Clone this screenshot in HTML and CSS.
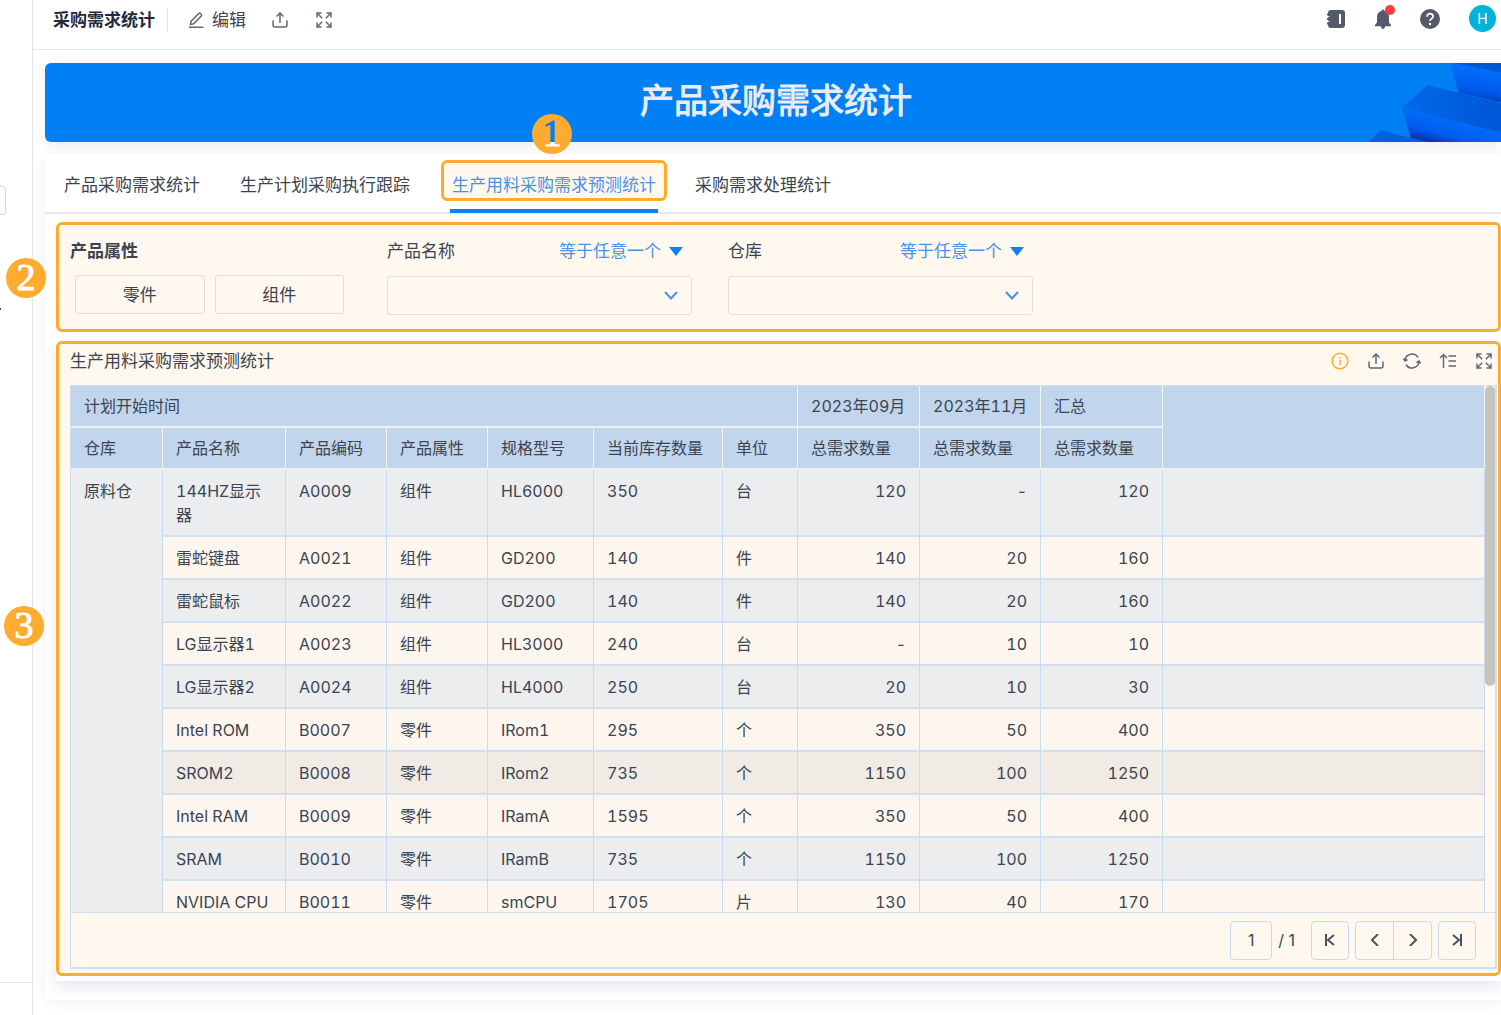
FILE: index.html
```html
<!DOCTYPE html>
<html lang="zh-CN">
<head>
    <meta charset="utf-8">
    <title>采购需求统计</title>
    <link rel="stylesheet" href="styles.css">
</head>
<body>
    <svg class="defs" width="0" height="0">
        <symbol id="i-export" viewBox="0 0 16 16"><path d="M1 8.500v4.500a2 2 0 0 0 2 2h10a2 2 0 0 0 2-2V8.500M8 11V1.500M4.500 4.500L8 1l3.500 3.500"/></symbol>
        <symbol id="i-full" viewBox="0 0 16 16"><path d="M1 5.500V1h4.500M1.200 1.200l5 5M10.500 1H15v4.500M14.800 1.200l-5 5M1 10.500V15h4.500M1.200 14.800l5-5M15 10.500V15h-4.500M14.800 14.800l-5-5"/></symbol>
    </svg>

    <aside class="side">
        <div class="side-box"></div>
        <div class="side-dot"></div>
        <div class="side-foot"></div>
    </aside>

    <div class="main">
        <header class="top">
            <h1>采购需求统计</h1>
            <button class="edit">
                <svg class="icon" viewBox="0 0 16 16"><path d="M1 15.300h14.500M2.500 12.500l.6-3.300L10.800 1.500q.8-.7 1.600 0l.9.900q.7.800 0 1.600L5.600 11.700z"/></svg>
                编辑
            </button>
            <button class="tool" aria-label="导出"><svg class="icon"><use href="#i-export"/></svg></button>
            <button class="tool" aria-label="全屏"><svg class="icon"><use href="#i-full"/></svg></button>
            <div class="user">
                <button aria-label="通讯录"><svg width="20" height="20" viewBox="0 0 20 20"><rect x="2" y="1" width="17" height="18" rx="3" fill="#535a69"/><path d="M1 5.500h3M1 10h3M1 14.500h3" stroke="#535a69" stroke-width="2"/><path d="M2 7.700h1.500M2 12.300h1.500" stroke="#fff"/><path d="M14 5v10" stroke="#fff" stroke-width="2"/></svg></button>
                <button class="bell" aria-label="消息"><svg width="16" height="20" viewBox="0 0 16 20"><path d="M8 0.500q1.300 0 1.300 1.300C12.500 2.600 14 5 14 8v5.500l2 2.500v1.200H0V16l2-2.500V8c0-3 1.500-5.400 4.700-6.200Q6.700.5 8 .5zM6 17h4q0 3-2 3t-2-3z" fill="#535a69"/></svg></button>
                <button aria-label="帮助"><svg width="20" height="20" viewBox="0 0 20 20"><circle cx="10" cy="10" r="10" fill="#535a69"/><path d="M7 7.800C7 3.500 13 4 13 7.500c0 2.200-3 2.300-3 4.500" fill="none" stroke="#fff" stroke-width="1.800"/><circle cx="10" cy="15" r="1.200" fill="#fff"/></svg></button>
                <a class="avatar" href="#">H</a>
            </div>
        </header>

        <div class="banner">
            <h2>产品采购需求统计</h2>
            <svg class="banner-art" viewBox="500 189 400 236">
                <defs>
                    <linearGradient id="g1" x1="0" y1="0" x2="-0.150" y2="1"><stop offset="0" stop-color="#0070fb"/><stop offset=".6" stop-color="#005aea"/><stop offset="1" stop-color="#002a9c"/></linearGradient>
                    <linearGradient id="g2" x1="0" y1="0" x2="1" y2="0"><stop offset="0" stop-color="#006aea"/><stop offset="1" stop-color="#0056d6"/></linearGradient>
                    <linearGradient id="g3" gradientUnits="userSpaceOnUse" x1="720" y1="350" x2="700" y2="430"><stop offset="0" stop-color="#006cf8"/><stop offset=".6" stop-color="#005cee"/><stop offset="1" stop-color="#0030a8"/></linearGradient>
                </defs>
                <path d="M750 189h150v118L773 277z" fill="url(#g1)"/>
                <path d="M758 189h142v28z" fill="#0058d0"/>
                <path d="M604 322l76-67 220 54v90z" fill="url(#g2)"/>
                <path d="M604 322l296 75v28H640l-9-11z" fill="url(#g3)"/>
                <path d="M505 425l37-34 140 34z" fill="#005fdd"/>
            </svg>
        </div>

        <div class="card">
            <nav class="tabs">
                <a href="#">产品采购需求统计</a>
                <a href="#">生产计划采购执行跟踪</a>
                <a href="#" class="active">生产用料采购需求预测统计<span class="badge one"><b>1</b></span></a>
                <a href="#">采购需求处理统计</a>
            </nav>

            <section class="panel filters">
                <span class="badge two">2</span>
                <div class="kind">
                    <strong>产品属性</strong>
                    <div class="kind-btns">
                        <button>零件</button>
                        <button>组件</button>
                    </div>
                </div>
                <div class="field">
                    <div class="field-head">
                        <label for="name">产品名称</label>
                        <button class="op">等于任意一个<i></i></button>
                    </div>
                    <div class="select">
                        <select id="name"><option></option></select>
                        <svg width="14" height="9" viewBox="0 0 14 9"><path d="M1 1l6 6.500L13 1"/></svg>
                    </div>
                </div>
                <div class="field">
                    <div class="field-head">
                        <label for="store">仓库</label>
                        <button class="op">等于任意一个<i></i></button>
                    </div>
                    <div class="select">
                        <select id="store"><option></option></select>
                        <svg width="14" height="9" viewBox="0 0 14 9"><path d="M1 1l6 6.500L13 1"/></svg>
                    </div>
                </div>
            </section>

            <div class="report-wrap">
            <section class="panel report">
                <span class="badge three">3</span>
                <div class="report-head">
                    <h3>生产用料采购需求预测统计</h3>
                    <div class="report-tools">
                        <button class="info" aria-label="说明"><svg class="icon" viewBox="0 0 16 16"><circle cx="8" cy="8" r="7.800"/><path d="M8 7v5M8 4v1.500"/></svg></button>
                        <button aria-label="导出"><svg class="icon"><use href="#i-export"/></svg></button>
                        <button aria-label="刷新"><svg class="icon" viewBox="0 0 16 16"><path d="M1 7.500A7 7 0 0 1 14 4.500M15 8.500A7 7 0 0 1 2 11.500M-.5 5.500L1 8l2.500-1.500M12.500 9.500L15 8l1.500 2.500"/></svg></button>
                        <button aria-label="排序"><svg class="icon" viewBox="0 0 16 16"><path d="M3.500 15V2M0 5l3.500-3.500L7 5M8.500 3H16M8.500 8H16M8.500 13H16"/></svg></button>
                        <button aria-label="全屏"><svg class="icon"><use href="#i-full"/></svg></button>
                    </div>
                </div>

                <div class="grid">
                    <div class="grid-view">
                        <table>
                            <colgroup>
                                <col class="w92"><col class="w123"><col class="w101"><col class="w101"><col class="w106"><col class="w129"><col class="w75"><col class="w122"><col class="w121"><col class="w122"><col>
                            </colgroup>
                            <thead>
                                <tr><th colspan="7">计划开始时间</th><th>2023年09月</th><th>2023年11月</th><th>汇总</th><th rowspan="2"></th></tr>
                                <tr><th>仓库</th><th>产品名称</th><th>产品编码</th><th>产品属性</th><th>规格型号</th><th>当前库存数量</th><th>单位</th><th>总需求数量</th><th>总需求数量</th><th>总需求数量</th></tr>
                            </thead>
                            <tbody>
                                <tr class="tall"><td rowspan="10">原料仓</td><td>144HZ显示器</td><td>A0009</td><td>组件</td><td>HL6000</td><td>350</td><td>台</td><td class="n">120</td><td class="n">-</td><td class="n">120</td><td></td></tr>
                                <tr><td>雷蛇键盘</td><td>A0021</td><td>组件</td><td>GD200</td><td>140</td><td>件</td><td class="n">140</td><td class="n">20</td><td class="n">160</td><td></td></tr>
                                <tr><td>雷蛇鼠标</td><td>A0022</td><td>组件</td><td>GD200</td><td>140</td><td>件</td><td class="n">140</td><td class="n">20</td><td class="n">160</td><td></td></tr>
                                <tr><td>LG显示器1</td><td>A0023</td><td>组件</td><td>HL3000</td><td>240</td><td>台</td><td class="n">-</td><td class="n">10</td><td class="n">10</td><td></td></tr>
                                <tr><td>LG显示器2</td><td>A0024</td><td>组件</td><td>HL4000</td><td>250</td><td>台</td><td class="n">20</td><td class="n">10</td><td class="n">30</td><td></td></tr>
                                <tr><td>Intel ROM</td><td>B0007</td><td>零件</td><td>IRom1</td><td>295</td><td>个</td><td class="n">350</td><td class="n">50</td><td class="n">400</td><td></td></tr>
                                <tr class="hover"><td>SROM2</td><td>B0008</td><td>零件</td><td>IRom2</td><td>735</td><td>个</td><td class="n">1150</td><td class="n">100</td><td class="n">1250</td><td></td></tr>
                                <tr><td>Intel RAM</td><td>B0009</td><td>零件</td><td>IRamA</td><td>1595</td><td>个</td><td class="n">350</td><td class="n">50</td><td class="n">400</td><td></td></tr>
                                <tr><td>SRAM</td><td>B0010</td><td>零件</td><td>IRamB</td><td>735</td><td>个</td><td class="n">1150</td><td class="n">100</td><td class="n">1250</td><td></td></tr>
                                <tr><td>NVIDIA CPU</td><td>B0011</td><td>零件</td><td>smCPU</td><td>1705</td><td>片</td><td class="n">130</td><td class="n">40</td><td class="n">170</td><td></td></tr>
                            </tbody>
                        </table>
                        <div class="track"><div class="thumb"></div></div>
                    </div>
                    <div class="pager">
                        <input type="text" value="1" aria-label="页码">
                        <span>/ 1</span>
                        <button aria-label="首页"><svg width="12" height="12" viewBox="0 0 12 12"><path d="M2 0v12M10 1L4 6l6 5"/></svg></button>
                        <div class="pair">
                            <button aria-label="上一页"><svg width="12" height="12" viewBox="0 0 12 12"><path d="M9 0L3 6l6 6"/></svg></button>
                            <button aria-label="下一页"><svg width="12" height="12" viewBox="0 0 12 12"><path d="M3 0l6 6-6 6"/></svg></button>
                        </div>
                        <button aria-label="末页"><svg width="12" height="12" viewBox="0 0 12 12"><path d="M10 0v12M2 1l6 5-6 5"/></svg></button>
                    </div>
                </div>
            </section>
            </div>
        </div>
    </div>
</body>
</html>
```

FILE: styles.css
```css
* {
    box-sizing: border-box;
}
body {
    margin: 0;
    display: flex;
    min-height: 100vh;
    overflow: hidden;
    background: #fff;
    color: #3c4450;
    font-family: Inter, "Noto Sans CJK SC", sans-serif;
    font-size: 17px;
    line-height: 24px;
}
h1, h2, h3 {
    margin: 0;
    font-size: 17px;
}
a {
    color: inherit;
    text-decoration: none;
}
button, input, select {
    margin: 0;
    padding: 0;
    border: none;
    background: none;
    color: inherit;
    font: inherit;
}
button {
    display: flex;
    align-items: center;
    justify-content: center;
}
.defs {
    position: absolute;
}
.icon {
    width: 16px;
    height: 16px;
    fill: none;
    stroke: #626976;
    stroke-width: 1.5;
    overflow: visible;
}

/* left menu, mostly scrolled away */
.side {
    display: flex;
    flex-direction: column;
    flex: none;
    width: 33px;
    border-right: 1px solid #e2e3e7;
}
.side-box {
    width: 6px;
    height: 29px;
    margin-top: 186px;
    border: 1px solid #d9dadd;
    border-left: none;
    border-radius: 0 4px 4px 0;
}
.side-dot {
    width: 1px;
    height: 2px;
    margin-top: 93px;
    background: #3c4450;
}
.side-foot {
    height: 33px;
    margin-top: auto;
    border-top: 1px solid #e8e8ec;
}

.main {
    flex: 1;
    min-width: 0;
}
.top {
    display: flex;
    align-items: center;
    height: 50px;
    padding: 0 5px 10px 20px;
    border-bottom: 1px solid #e6e7ea;
}
.top h1 {
    padding-right: 12px;
    border-right: 1px solid #e2e3e7;
    color: #1f2a3d;
}
.edit {
    gap: 8px;
    margin: 0 26px 0 20px;
}
.tool {
    margin-right: 28px;
}
.user {
    display: flex;
    align-items: center;
    gap: 29px;
    margin: 0 0 2px auto;
}
.bell {
    position: relative;
}
.bell::after {
    content: "";
    position: absolute;
    top: -4px;
    right: -4px;
    width: 10px;
    height: 10px;
    border-radius: 50%;
    background: #fb3b44;
}
.avatar {
    width: 27px;
    height: 27px;
    border-radius: 50%;
    background: #00b3d8;
    color: #fff;
    font-size: 14px;
    line-height: 27px;
    text-align: center;
}

.banner {
    position: relative;
    height: 79px;
    margin: 13px 0 0 12px;
    border-radius: 6px 0 0 6px;
    background: #0080f4;
    box-shadow: 0 3px 12px rgba(60, 50, 120, 0.1);
}
.banner h2 {
    padding-left: 6px;
    color: #ebebf2;
    font-size: 34px;
    font-weight: 400;
    line-height: 76px;
    text-align: center;
    -webkit-text-stroke: 1px #ebebf2;
}
.banner-art {
    position: absolute;
    top: 0;
    right: 0;
    height: 79px;
}

.card {
    position: relative;
    margin: 12px 0 15px 12px;
    padding: 0 0 19px 11px;
    background: #fff;
    box-shadow: 0 2px 12px rgba(60, 50, 120, 0.08);
}
.tabs {
    display: flex;
    gap: 22px;
    height: 60px;
    margin-left: -11px;
    padding: 6px 0 0 10px;
    border-bottom: 2px solid #e9e9eb;
}
.tabs a {
    position: relative;
    height: 41px;
    padding: 13px 9px 0;
}
.tabs .active {
    margin-right: -3px;
    padding: 10px 8px 0;
    border: 3px solid #ffab2f;
    border-radius: 6px;
    background: #fff8ee;
    color: #4a90e8;
}
.tabs .active::after {
    content: "";
    position: absolute;
    left: 6px;
    right: 6px;
    bottom: -15px;
    height: 4px;
    background: #1080f0;
}

/* numbered callouts */
.badge {
    position: absolute;
    z-index: 2;
    width: 40px;
    height: 40px;
    border-radius: 50%;
    background: #ffab2f;
    color: #fff;
    font-family: "Liberation Serif", serif;
    font-size: 38px;
    line-height: 38px;
    text-align: center;
    -webkit-text-stroke: 1px;
}
.badge.one {
    top: -49px;
    left: 88px;
}
.badge.two {
    top: 33px;
    left: -53px;
}
.badge.three {
    top: 262px;
    left: -55px;
}
/* the digit shows the banner above and the card below */
.badge b {
    display: block;
    background: linear-gradient(#0080f4 28px, #fff 28px);
    background-clip: text;
    -webkit-background-clip: text;
    color: transparent;
    font-weight: 400;
}

.panel {
    position: relative;
    border: 3px solid #ffab2f;
    border-radius: 6px;
    background: #fff8ee;
}
.filters {
    display: flex;
    gap: 36px;
    height: 110px;
    margin-top: 8px;
    padding: 14px 11px;
}
.kind {
    width: 281px;
}
.kind-btns {
    display: flex;
    gap: 10px;
    margin: 12px 7px 0 5px;
}
.kind-btns button {
    flex: 1;
    height: 39px;
    border: 1px solid #e6dbd1;
    border-radius: 3px;
}
.field {
    width: 305px;
}
.field-head {
    display: flex;
    justify-content: space-between;
    padding-right: 9px;
}
.op {
    gap: 8px;
    color: #4a90e8;
}
.op i {
    border: 7px solid transparent;
    border-top: 9px solid #1080f0;
    border-bottom: none;
}
.select {
    position: relative;
    margin-top: 13px;
}
.select select {
    display: block;
    width: 100%;
    height: 39px;
    border: 1px solid #e6dfd3;
    border-radius: 3px;
    appearance: none;
}
.select svg {
    position: absolute;
    top: 15px;
    right: 14px;
    fill: none;
    stroke: #4a90e8;
    stroke-width: 2;
}

.report-wrap {
    margin-top: 9px;
    padding-bottom: 5px;
    background: #fff;
    box-shadow: 0 6px 14px rgba(80, 30, 140, 0.12);
}
.report {
    padding: 0 1px 4px 11px;
}
.report-head {
    display: flex;
    align-items: center;
    justify-content: space-between;
    height: 41px;
    padding: 0 5px 8px 0;
}
.report-head h3 {
    font-weight: 400;
}
.report-tools {
    display: flex;
    gap: 20px;
}
.report-tools .info .icon {
    stroke: #ffab2f;
}
.grid {
    border: 1px solid #cfdff0;
    border-width: 1px 2px 2px 1px;
}
.grid-view {
    display: flex;
    height: 526px;
    overflow: hidden;
}
table {
    flex: 1;
    width: 100%;
    table-layout: fixed;
    border-collapse: separate;
    border-spacing: 0;
    font-size: 16px;
    font-variant-numeric: tabular-nums;
}
.w75 { width: 75px; }
.w92 { width: 92px; }
.w101 { width: 101px; }
.w106 { width: 106px; }
.w121 { width: 121px; }
.w122 { width: 122px; }
.w123 { width: 123px; }
.w129 { width: 129px; }
th {
    height: 42px;
    padding: 0 12px 0 13px;
    border-right: 1px solid #f2f3f3;
    border-bottom: 2px solid #eef0f1;
    background: #c1d5ec;
    font-weight: 400;
    text-align: left;
    white-space: nowrap;
}
td {
    height: 43px;
    padding: 9px 13px 8px;
    border-right: 1px solid #c8dbef;
    border-bottom: 2px solid #d0e0f0;
    background: #fdf6ef;
    vertical-align: top;
}
.tall td {
    height: 67px;
}
tr:nth-child(odd) td {
    background: #ebedef;
}
tr.hover td {
    background: #f0ebe5;
}
.n {
    text-align: right;
}
.track {
    flex: none;
    width: 10px;
}
.thumb {
    height: 57%;
    border-radius: 5px;
    background: #c6c3bc;
}
.pager {
    display: flex;
    align-items: center;
    justify-content: flex-end;
    gap: 6px;
    height: 55px;
    padding-right: 19px;
    border-top: 1px solid #cfdff0;
    font-size: 16px;
}
.pager input, .pager > button {
    width: 38px;
    height: 39px;
    border: 1px solid #c6d9ee;
    border-radius: 4px;
}
.pager input {
    width: 42px;
    text-align: center;
}
.pager span {
    margin-right: 10px;
}
.pair {
    display: flex;
    width: 77px;
    height: 39px;
    border: 1px solid #c6d9ee;
    border-radius: 4px;
}
.pair button {
    flex: 1;
}
.pair button + button {
    border-left: 1px solid #c6d9ee;
}
.pager svg {
    fill: none;
    stroke: #4b525c;
    stroke-width: 2;
}
```
